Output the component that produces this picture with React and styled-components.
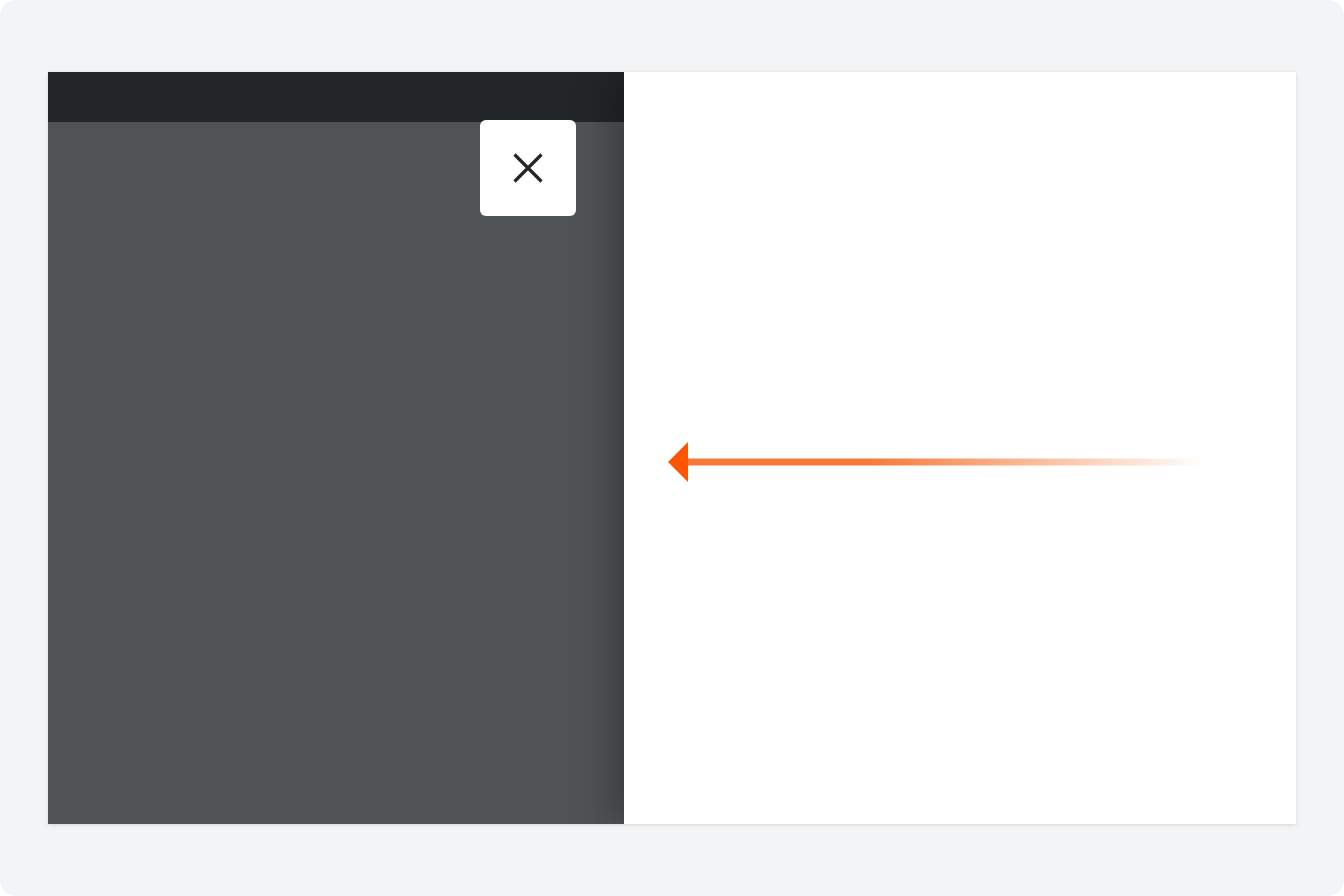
import React from "react";
import styled, { createGlobalStyle } from "styled-components";

const Global = createGlobalStyle`
    html, body {
        margin: 0;
        padding: 0;
        background: #ffffff;
        font-family: "Inter", "Liberation Sans", sans-serif;
    }
`

const Screen = styled.div`
    width: 1344px;
    height: 896px;
    box-sizing: border-box;
    padding: 72px 48px;
    background: #f3f4f6;
    border-radius: 16px;
    display: flex;
`

const Frame = styled.div`
    flex: 1;
    display: flex;
    position: relative;
    overflow: hidden;
    box-shadow: 0 1px 4px rgba(0, 0, 0, 0.12);
`

const Backdrop = styled.div`
    width: 576px;
    display: flex;
    flex-direction: column;
    position: relative;
`

const TopBar = styled.div`
    height: 50px;
    background: #232629;
`

const Dim = styled.div`
    flex: 1;
    background: #4f5356;
`

const CloseButton = styled.button`
    position: absolute;
    top: 48px;
    right: 48px;
    width: 96px;
    height: 96px;
    border: none;
    border-radius: 6px;
    background: #ffffff;
    display: flex;
    align-items: center;
    justify-content: center;
    padding: 0;
    cursor: pointer;
`

const Drawer = styled.div`
    flex: 1;
    background: #ffffff;
    position: relative;
    z-index: 1;
    box-shadow: -12px 0 36px rgba(0, 0, 0, 0.28);
    display: flex;
    flex-direction: column;
    padding: 370px 0 0 44px;
`

const Arrow = styled.svg`
    display: block;
`

function CloseIcon() {
    return (
        <svg width="30" height="30" viewBox="0 0 30 30">
            <path d="M1.5 1.5 L28.5 28.5 M28.5 1.5 L1.5 28.5" stroke="#23272a" strokeWidth="3.2" fill="none" />
        </svg>
    )
}

function BackArrow() {
    return (
        <Arrow width="540" height="40" viewBox="0 0 540 40">
            <defs>
                <linearGradient id="fade" x1="20" y1="0" x2="537" y2="0" gradientUnits="userSpaceOnUse">
                    <stop offset="0" stopColor="#f47a3a" stopOpacity="1" />
                    <stop offset="0.35" stopColor="#f47a3a" stopOpacity="1" />
                    <stop offset="1" stopColor="#f47a3a" stopOpacity="0" />
                </linearGradient>
            </defs>
            <rect x="20" y="16.5" width="517" height="7" fill="url(#fade)" />
            <polygon points="0,20 20,0 20,40" fill="#ff5500" />
        </Arrow>
    )
}

export default function App() {
    return (
        <>
            <Global />
            <Screen>
                <Frame>
                    <Backdrop>
                        <TopBar />
                        <Dim />
                        <CloseButton aria-label="Close">
                            <CloseIcon />
                        </CloseButton>
                    </Backdrop>
                    <Drawer>
                        <BackArrow />
                    </Drawer>
                </Frame>
            </Screen>
        </>
    )
}
